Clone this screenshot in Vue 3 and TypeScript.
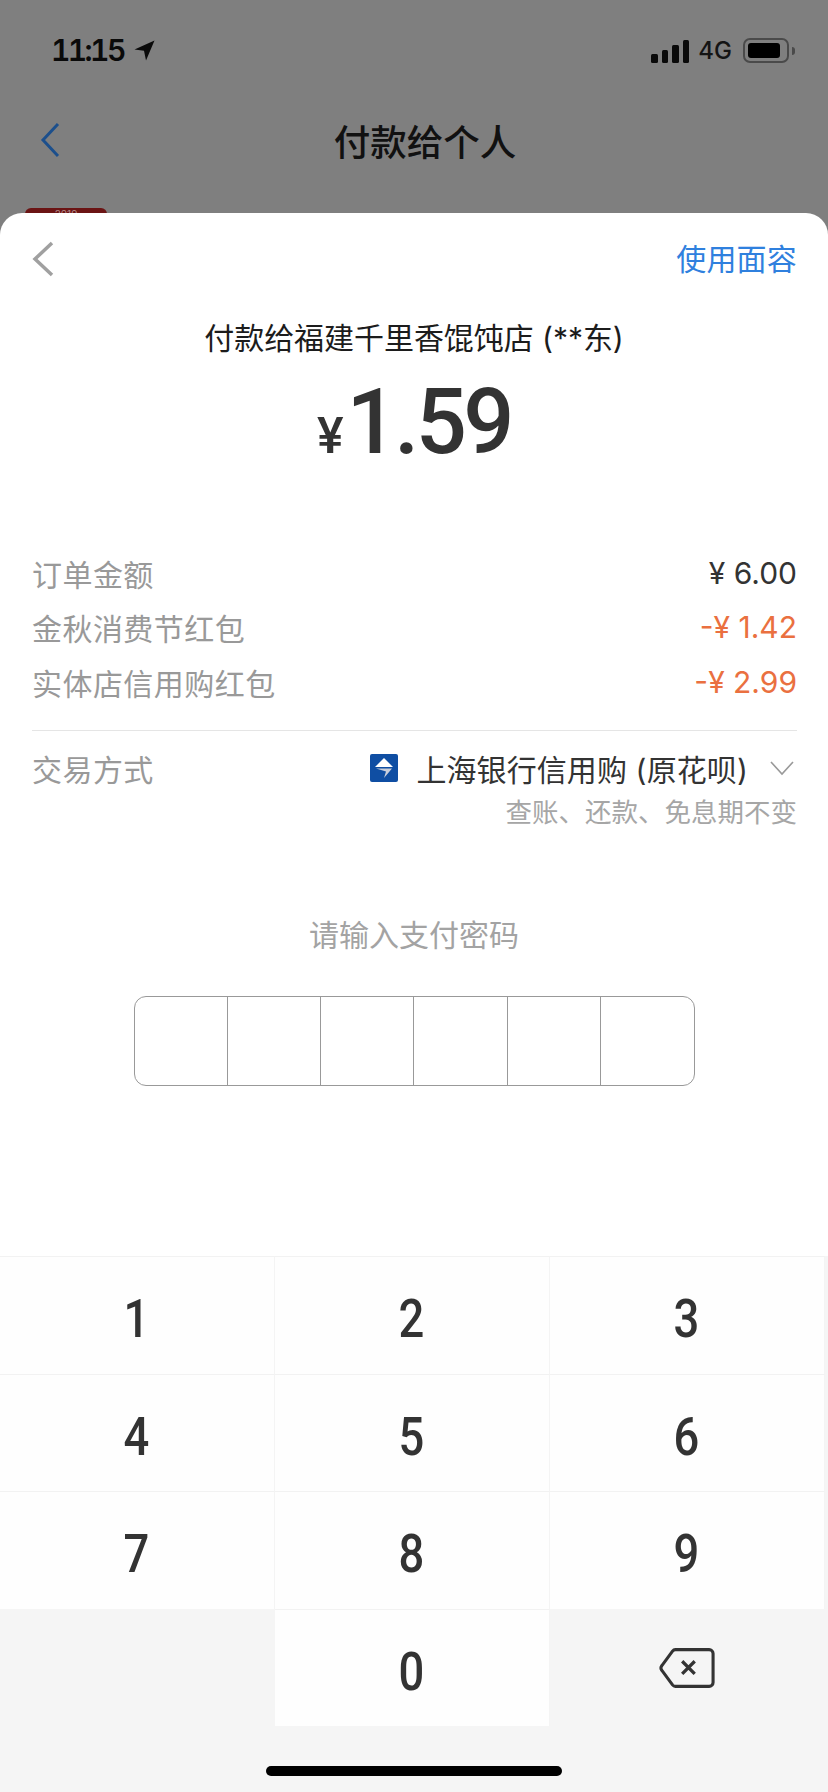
<script setup lang="ts">
interface FeeRow {
  label: string;
  value: string;
  accent?: boolean;
}

const rows: FeeRow[] = [
  { label: '订单金额', value: '¥ 6.00' },
  { label: '金秋消费节红包', value: '-¥ 1.42', accent: true },
  { label: '实体店信用购红包', value: '-¥ 2.99', accent: true },
];
const cells = [1, 2, 3, 4, 5, 6];
const digits = ['1', '2', '3', '4', '5', '6', '7', '8', '9'];
</script>

<template>
  <div class="page">
    <div class="status">
      <div class="clock">
        <span class="time">11:15</span>
        <svg width="21" height="21" viewBox="0 0 21 21"><path d="M20.500 .5 .5 9.500l9.500 1.300L12 20.500z" fill="#0a0a0a" /></svg>
      </div>
      <div class="signals">
        <div class="bars"><i class="b1"></i><i class="b2"></i><i class="b3"></i><i class="b4"></i></div>
        <span class="net">4G</span>
        <div class="battery"><div class="level"></div></div>
        <div class="nub"></div>
      </div>
    </div>
    <div class="nav">
      <svg class="nav-back" width="20" height="36" viewBox="0 0 20 36"><path d="M18 2 3 18l15 16" fill="none" stroke="#1c4f8c" stroke-width="3" /></svg>
      <span class="nav-title">付款给个人</span>
    </div>
    <div class="tag">2019</div>

    <div class="sheet">
      <div class="sheet-head">
        <svg class="sheet-back" width="22" height="36" viewBox="0 0 22 36"><path d="M20 2 3 18l17 16" fill="none" stroke="#a0a0a0" stroke-width="3.500" /></svg>
        <span class="face">使用面容</span>
      </div>
      <div class="payee">付款给福建千里香馄饨店 (**东)</div>
      <div class="amount"><span class="yen">¥</span><span class="sum">1.59</span></div>

      <div class="fees">
        <div v-for="row in rows" :key="row.label" class="fee">
          <span class="fee-label">{{ row.label }}</span>
          <span class="fee-value" :class="{ accent: row.accent }">{{ row.value }}</span>
        </div>
      </div>

      <div class="method">
        <span class="fee-label">交易方式</span>
        <div class="method-right">
          <div class="method-main">
            <svg class="bank" width="28" height="28" viewBox="0 0 28 28">
              <rect width="28" height="28" rx="2" fill="#0f4ea3" />
              <path d="M14 4 23 13H5z" fill="#fff" />
              <path d="M6 14.500h16L14 24l2-6.500z" fill="#c9cfdc" />
            </svg>
            <span class="bank-name">上海银行信用购 (原花呗)</span>
            <svg width="24" height="16" viewBox="0 0 24 16"><path d="M1 2l11 12L23 2" fill="none" stroke="#999" stroke-width="1.600" /></svg>
          </div>
          <div class="method-note">查账、还款、免息期不变</div>
        </div>
      </div>

      <div class="prompt">请输入支付密码</div>
      <div class="pin">
        <div v-for="c in cells" :key="c" class="pin-cell"></div>
      </div>

      <div class="keypad">
        <div class="keys">
          <div v-for="d in digits" :key="d" class="key"><span class="digit">{{ d }}</span></div>
          <div class="key blank"></div>
          <div class="key"><span class="digit">0</span></div>
          <div class="key blank del">
            <svg width="56" height="42" viewBox="0 0 58 42">
              <path d="M17 2h35a4 4 0 0 1 4 4v30a4 4 0 0 1-4 4H17a4 4 0 0 1-3-1.500L3 23.500a4 4 0 0 1 0-5L14 3.500A4 4 0 0 1 17 2z" fill="none" stroke="#333" stroke-width="3.200" />
              <path d="M24 14l13 13M37 14 24 27" fill="none" stroke="#333" stroke-width="3.400" />
            </svg>
          </div>
        </div>
        <div class="home-wrap"><div class="home"></div></div>
      </div>
    </div>
  </div>
</template>

<style scoped>
.page {
  position: relative;
  width: 828px;
  height: 1792px;
  overflow: hidden;
  background: #7f7f7f;
  font-family: Inter, "Noto Sans CJK SC", sans-serif;
  color: #333;
}

.status {
  height: 100px;
  padding: 38px 33px 0 51px;
  box-sizing: border-box;
  display: flex;
  justify-content: space-between;
  align-items: flex-start;
  color: #0a0a0a;
}
.clock {
  display: flex;
  align-items: center;
  gap: 10px;
}
.time {
  font-size: 30px;
  line-height: 24px;
  font-weight: 600;
  font-feature-settings: "tnum";
  letter-spacing: -2.600px;
}
.signals {
  display: flex;
  align-items: center;
  height: 25px;
}
.bars {
  display: flex;
  align-items: flex-end;
  gap: 4px;
  height: 23px;
  margin-top: 1px;
}
.bars i {
  width: 6.500px;
  background: #0a0a0a;
  border-radius: 1.500px;
}
.b1 { height: 9px; }
.b2 { height: 13px; }
.b3 { height: 18px; }
.b4 { height: 23px; }
.net {
  margin-left: 9px;
  font-size: 24px;
  font-weight: 500;
  color: #141414;
}
.battery {
  margin-left: 11px;
  width: 46px;
  height: 25px;
  box-sizing: border-box;
  border: 2px solid #4a4a4a;
  border-radius: 7px;
  padding: 3px;
}
.level {
  width: 32px;
  height: 15px;
  background: #000;
  border-radius: 3px;
}
.nub {
  margin-left: 3px;
  width: 3px;
  height: 8px;
  background: #4a4a4a;
  border-radius: 0 3px 3px 0;
}

.nav {
  position: relative;
  height: 80px;
  display: flex;
  align-items: center;
  justify-content: center;
  padding-left: 22px;
}
.nav-back {
  position: absolute;
  left: 40px;
  top: 22px;
}
.nav-title {
  font-size: 36.500px;
  font-weight: 500;
  color: #111;
}

.tag {
  position: absolute;
  left: 25px;
  top: 208px;
  width: 82px;
  height: 14px;
  background: #6b1414;
  border-radius: 6px 6px 0 0;
  text-align: center;
  font-size: 10px;
  line-height: 12px;
  color: #b58a8a;
}

.sheet {
  position: absolute;
  left: 0;
  right: 0;
  top: 213px;
  bottom: 0;
  background: #fff;
  border-radius: 22px 22px 0 0;
  display: flex;
  flex-direction: column;
}
.sheet-head {
  height: 72px;
  padding: 15px 31px 0 32px;
  box-sizing: border-box;
  display: flex;
  justify-content: space-between;
  align-items: center;
}
.sheet-back {
  margin-top: 4px;
}
.face {
  font-size: 30px;
  letter-spacing: .2px;
  color: #2f80de;
}
.payee {
  margin-top: 24px;
  text-align: center;
  font-size: 30px;
  line-height: 58px;
  color: #1c1c1c;
  letter-spacing: -.05px;
}
.amount {
  margin-top: 13px;
  height: 73px;
  display: flex;
  justify-content: center;
  align-items: baseline;
  color: #333;
  font-family: Roboto, sans-serif;
  font-weight: 500;
}
.yen {
  font-size: 50px;
  margin-right: 3px;
}
.sum {
  font-size: 90px;
  line-height: 85px;
  letter-spacing: -3.500px;
}

.fees {
  margin-top: 93px;
  padding: 0 31px 0 32px;
}
.fee {
  height: 54.300px;
  display: flex;
  justify-content: space-between;
  align-items: center;
}
.fee-label {
  font-size: 30px;
  letter-spacing: .45px;
  color: #999;
}
.fee-value {
  font-size: 30px;
  color: #333;
}
.accent {
  color: #ea7040;
}

.method {
  margin: 21px 31px 0 32px;
  padding-top: 13px;
  border-top: 1px solid #e5e5e5;
  display: flex;
  justify-content: space-between;
  align-items: flex-start;
}
.method .fee-label {
  line-height: 52px;
}
.method-right {
  display: flex;
  flex-direction: column;
  align-items: flex-end;
}
.method-main {
  display: flex;
  align-items: center;
  height: 52px;
  margin-top: -2px;
}
.bank {
  margin-right: 18px;
}
.bank-name {
  font-size: 30px;
  letter-spacing: .1px;
  color: #333;
  margin-right: 22px;
}
.method-main svg:last-child {
  margin-right: 3px;
}
.method-note {
  margin-top: -1px;
  font-size: 26.500px;
  line-height: 38px;
  color: #a6a6a6;
}

.prompt {
  margin-top: 82px;
  text-align: center;
  font-size: 30px;
  line-height: 44px;
  color: #a3a3a3;
}
.pin {
  margin: 39px auto 0;
  width: 561px;
  height: 90px;
  box-sizing: border-box;
  border: 1.500px solid #999;
  border-radius: 12px;
  display: flex;
}
.pin-cell {
  flex: 1;
  border-left: 1px solid #999;
}
.pin-cell:first-child {
  border-left: 0;
}

.keypad {
  margin-top: auto;
  background: #f5f5f5;
}
.keys {
  display: grid;
  grid-template-columns: repeat(3, 275px);
  grid-auto-rows: 117.500px;
}
.key {
  box-sizing: border-box;
  background: #fefefe;
  border-top: 1px solid #f2f2f2;
  border-right: 1px solid #f4f4f4;
  display: flex;
  align-items: center;
  justify-content: center;
}
.key.blank {
  background: none;
  border-color: transparent;
}
.digit {
  display: inline-block;
  font-family: Roboto, sans-serif;
  font-weight: 500;
  font-size: 54px;
  line-height: 60px;
  color: #333;
  transform: scaleX(.84);
  margin: 8px 2px 0 0;
}
.home-wrap {
  height: 66px;
  display: flex;
  justify-content: center;
  padding-top: 40px;
  box-sizing: border-box;
}
.home {
  width: 296px;
  height: 10px;
  background: #000;
  border-radius: 5px;
}
</style>
